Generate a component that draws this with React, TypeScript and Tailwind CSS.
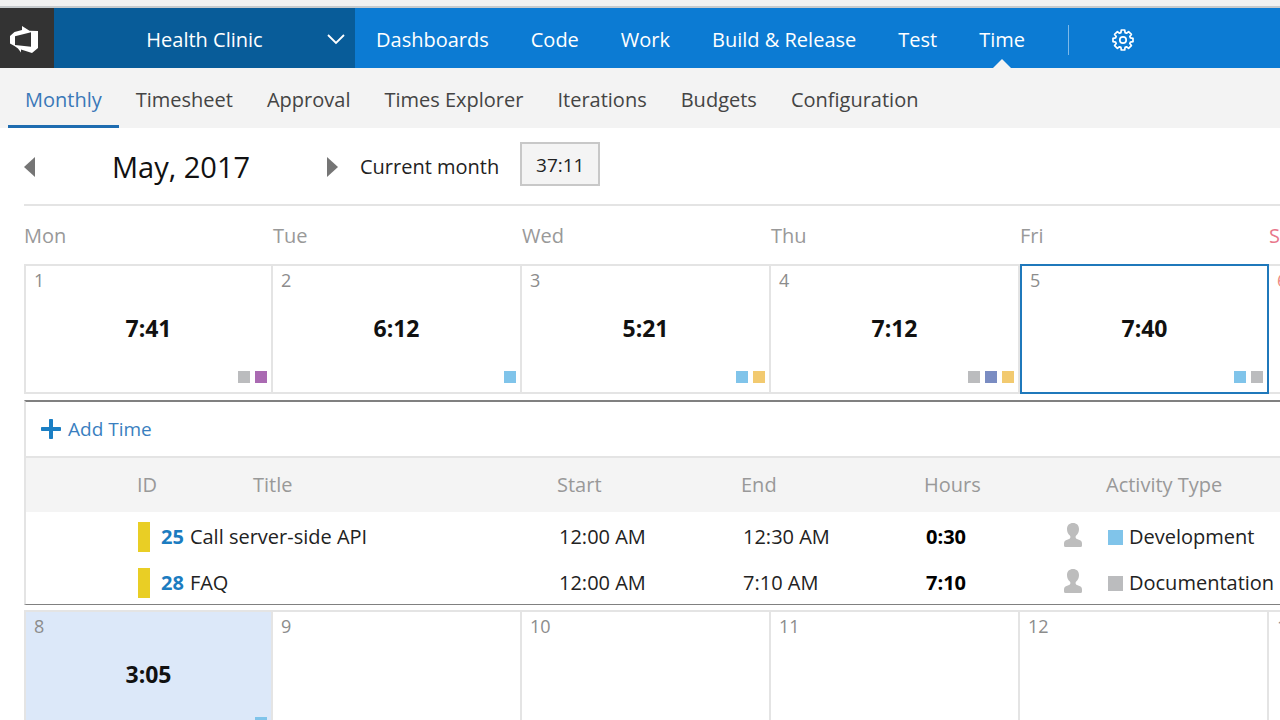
import React, { useState } from 'react';
import clsx from 'clsx';

interface Day {
  date: number;
  total?: string;
  marks?: string[];
  weekend?: boolean;
  filled?: boolean;
}

interface Entry {
  id: number;
  title: string;
  start: string;
  end: string;
  hours: string;
  activity: string;
  color: string;
}

const BLUE = 'bg-[#80c4ea]';
const GRAY = 'bg-[#bbbcbe]';
const PURPLE = 'bg-[#aa6ab2]';
const INDIGO = 'bg-[#7a8cc2]';
const YELLOW = 'bg-[#f2ca70]';

const hubs = ['Dashboards', 'Code', 'Work', 'Build & Release', 'Test', 'Time'];

const tabs = ['Monthly', 'Timesheet', 'Approval', 'Times Explorer', 'Iterations', 'Budgets', 'Configuration'];

const weekdays = ['Mon', 'Tue', 'Wed', 'Thu', 'Fri', 'Sat', 'Sun'];

const firstWeek: Day[] = [
  { date: 1, total: '7:41', marks: [GRAY, PURPLE] },
  { date: 2, total: '6:12', marks: [BLUE] },
  { date: 3, total: '5:21', marks: [BLUE, YELLOW] },
  { date: 4, total: '7:12', marks: [GRAY, INDIGO, YELLOW] },
  { date: 5, total: '7:40', marks: [BLUE, GRAY] },
  { date: 6, weekend: true },
  { date: 7, weekend: true },
];

const secondWeek: Day[] = [
  { date: 8, total: '3:05', marks: [BLUE], filled: true },
  { date: 9 },
  { date: 10 },
  { date: 11 },
  { date: 12 },
  { date: 13 },
  { date: 14 },
];

const entries: Entry[] = [
  { id: 25, title: 'Call server-side API', start: '12:00 AM', end: '12:30 AM', hours: '0:30', activity: 'Development', color: BLUE },
  { id: 28, title: 'FAQ', start: '12:00 AM', end: '7:10 AM', hours: '7:10', activity: 'Documentation', color: GRAY },
];

const LogoIcon = () => (
  <svg viewBox="0 0 28 27" className="w-[28px] h-[27px]" fill="#fff" fillRule="evenodd">
    <path d="M12 0 L19.5 4.8 L28 5 V22 L22 27 L11 23.5 L11 26.5 L8 22.5 L4.5 20 L0 17.5 V10 L4.5 6 L12 4 Z M5 10.2 V19 L21 20.8 V6.2 Z" />
  </svg>
);

// Eight-toothed outline gear
const GearIcon = () => (
  <svg viewBox="0 0 22 22" className="w-[22px] h-[22px]" fill="none" stroke="#fff" strokeWidth="1.7" strokeLinejoin="round">
    <path d="M9.3 1 h3.4 l.4 2.6 1.4.6 2.1-1.6 2.8 2.8 -1.6 2.1 .6 1.4 2.6.4 v3.4 l-2.6.4 -.6 1.4 1.6 2.1 -2.8 2.8 -2.1-1.6 -1.4.6 -.4 2.6 h-3.4 l-.4-2.6 -1.4-.6 -2.1 1.6 -2.8-2.8 1.6-2.1 -.6-1.4 -2.6-.4 v-3.4 l2.6-.4 .6-1.4 -1.6-2.1 2.8-2.8 2.1 1.6 1.4-.6 z" />
    <circle cx="11" cy="11" r="3.2" />
  </svg>
);

const PersonIcon = () => (
  <svg viewBox="0 0 18 24" className="w-[18px] h-[24px]" fill="#bdbdbd">
    <path d="M9 0 C5.4 0 3 2.3 3 6 C3 8.8 4 11 5.8 12.6 C6.7 13.6 6.6 15.2 5.6 15.8 L2 17.2 C.6 17.8 0 18.8 0 20.5 V22.5 Q0 24 1.5 24 H16.5 Q18 24 18 22.5 V20.5 C18 18.8 17.4 17.8 16 17.2 L12.4 15.8 C11.4 15.2 11.3 13.6 12.2 12.6 C14 11 15 8.8 15 6 C15 2.3 12.6 0 9 0 Z" />
  </svg>
);

const PlusIcon = () => (
  <svg viewBox="0 0 20 20" className="w-[20px] h-[20px]" fill="#1b7fc4">
    <path d="M8.8 0 H11.2 Q12 0 12 .8 V8 H19.2 Q20 8 20 8.8 V11.2 Q20 12 19.2 12 H12 V19.2 Q12 20 11.2 20 H8.8 Q8 20 8 19.2 V12 H.8 Q0 12 0 11.2 V8.8 Q0 8 .8 8 H8 V.8 Q8 0 8.8 0 Z" />
  </svg>
);

interface DayCellProps {
  day: Day;
  selected: boolean;
  onSelect: (date: number) => void;
}

const DayCell: React.FC<DayCellProps> = ({ day, selected, onSelect }) => (
  <button
    onClick={() => onSelect(day.date)}
    className={clsx(
      'w-[249px] h-[130px] shrink-0 flex flex-col text-left border-2 pb-[9px]',
      selected ? 'border-[#1f78bb]' : 'border-[#e4e4e4] first:border-l-2 border-l-0',
      day.filled ? 'bg-[#dce8f9]' : 'bg-white'
    )}
  >
    <span className={clsx('px-2 text-lg leading-7', day.weekend ? 'text-[#ee8a80]' : 'text-[#8c8c8c]')}>
      {day.date}
    </span>
    <span className="mt-5 text-center text-[23px] leading-7 font-bold text-[#111]">{day.total}</span>
    <span className="mt-auto flex justify-end gap-[5px] h-3 pr-1">
      {day.marks?.map((mark, i) => (
        <span key={i} className={clsx('w-3 h-3', mark)} />
      ))}
    </span>
  </button>
);

const TimeTable = () => (
  <section className="border-l-2 border-l-[#e4e4e4] border-t-2 border-t-[#808080] border-b border-b-[#808080] mt-[6px] mb-[5px]">
    <div className="h-[56px] flex items-center border-b-2 border-[#e4e4e4] pl-[15px]">
      <button className="flex items-center gap-[7px] text-[19px] text-[#3a7fc0]">
        <PlusIcon />
        Add Time
      </button>
    </div>
    <table className="w-full table-fixed text-xl text-[#222]">
      <colgroup>
        <col className="w-[111px]" />
        <col className="w-[116px]" />
        <col className="w-[304px]" />
        <col className="w-[184px]" />
        <col className="w-[183px]" />
        <col className="w-[140px]" />
        <col className="w-[42px]" />
        <col />
      </colgroup>
      <thead>
        <tr className="h-[54px] bg-[#f4f4f4] text-left text-[#999]">
          <td />
          <th className="font-normal">ID</th>
          <th className="font-normal">Title</th>
          <th className="font-normal">Start</th>
          <th className="font-normal">End</th>
          <th className="font-normal">Hours</th>
          <td />
          <th className="font-normal">Activity Type</th>
        </tr>
      </thead>
      <tbody>
        {entries.map((entry) => (
          <tr key={entry.id} className="h-[46px]">
            <td />
            <td colSpan={2} className="pt-1">
              <div className="flex items-center pl-px">
                <span className="w-3 h-[30px] bg-[#e9ce25]" />
                <a href="#" className="ml-[11px] mr-[6px] font-bold text-[#1c7cc0]">{entry.id}</a>
                {entry.title}
              </div>
            </td>
            <td className="pl-[2px] pt-1">{entry.start}</td>
            <td className="pl-[2px] pt-1">{entry.end}</td>
            <td className="pl-[2px] pt-1 font-bold text-black">{entry.hours}</td>
            <td><PersonIcon /></td>
            <td className="pl-[2px] pt-1">
              <div className="flex items-center gap-[6px]">
                <span className={clsx('w-[15px] h-[15px]', entry.color)} />
                {entry.activity}
              </div>
            </td>
          </tr>
        ))}
      </tbody>
    </table>
  </section>
);

export default function App() {
  const [tab, setTab] = useState('Monthly');
  const [selected, setSelected] = useState(5);

  return (
    <div className="min-h-screen max-h-screen overflow-hidden bg-white font-['Open_Sans',sans-serif]">
      <div className="h-2 bg-[#f1f1f1] border-b-2 border-[#c6cacd]" />

      {/* Hub bar */}
      <header className="h-[60px] flex bg-[#0c7bd3] text-white text-xl">
        <a href="#" aria-label="Home" className="w-[54px] bg-[#333] flex items-center pl-[10px] pt-[2px]">
          <LogoIcon />
        </a>
        <button className="w-[301px] bg-[#085c99] flex items-center pl-[28px] pr-[10px] pt-[3px]">
          <span className="flex-1 text-center">Health Clinic</span>
          <svg viewBox="0 0 18 11" className="w-[18px] h-[11px]" fill="none" stroke="#fff" strokeWidth="1.8">
            <path d="M1 1 L9 9 L17 1" />
          </svg>
        </button>
        <nav className="flex">
          {hubs.map((hub) => (
            <a key={hub} href="#" className="relative px-[21px] pt-[3px] flex items-center">
              {hub}
              {hub === 'Time' && (
                <svg viewBox="0 0 18 9" className="absolute bottom-0 left-1/2 -ml-[9px] w-[18px] h-[9px]" fill="#f3f3f3">
                  <path d="M0 9 L9 0 L18 9 Z" />
                </svg>
              )}
            </a>
          ))}
        </nav>
        <div className="flex items-center pt-[3px]">
          <span className="ml-[22px] w-px h-[30px] bg-[#7db9e9]" />
          <button aria-label="Settings" className="ml-[43px]">
            <GearIcon />
          </button>
        </div>
      </header>

      {/* Tabs */}
      <nav className="h-[60px] flex bg-[#f3f3f3] pl-2 text-xl">
        {tabs.map((item) => (
          <button
            key={item}
            onClick={() => setTab(item)}
            className={clsx(
              'px-[17px] pt-[7px] border-b-3',
              item === tab ? 'border-[#1e6cb0] text-[#3a78b8]' : 'border-transparent text-[#444]'
            )}
          >
            {item}
          </button>
        ))}
      </nav>

      <main className="pl-6">
        <div className="h-[78px] pt-[2px] flex items-center border-b-2 border-[#e4e4e4] text-xl text-[#222]">
          <button aria-label="Previous month">
            <svg viewBox="0 0 11 20" className="w-[11px] h-[20px]" fill="#757575">
              <path d="M11 0 V20 L0 10 Z" />
            </svg>
          </button>
          <h1 className="w-[292px] text-center text-[29px] text-[#111]">May, 2017</h1>
          <button aria-label="Next month">
            <svg viewBox="0 0 11 20" className="w-[11px] h-[20px]" fill="#757575">
              <path d="M0 0 V20 L11 10 Z" />
            </svg>
          </button>
          <button className="ml-[22px]">Current month</button>
          <output className="ml-[21px] w-[80px] h-[44px] mb-[6px] pt-[2px] flex items-center justify-center border-2 border-[#c8c8c8] bg-[#f4f4f4] text-[19px]">
            37:11
          </output>
        </div>

        <div className="h-[58px] pt-[2px] flex items-center text-xl text-[#999]">
          {weekdays.map((name) => (
            <div key={name} className={clsx('w-[249px] shrink-0', name.startsWith('S') && 'text-[#e8788c]')}>
              {name}
            </div>
          ))}
        </div>

        <div className="flex">
          {firstWeek.map((day) => (
            <DayCell key={day.date} day={day} selected={day.date === selected} onSelect={setSelected} />
          ))}
        </div>
        <TimeTable />
        <div className="flex">
          {secondWeek.map((day) => (
            <DayCell key={day.date} day={day} selected={day.date === selected} onSelect={setSelected} />
          ))}
        </div>
      </main>
    </div>
  );
}
